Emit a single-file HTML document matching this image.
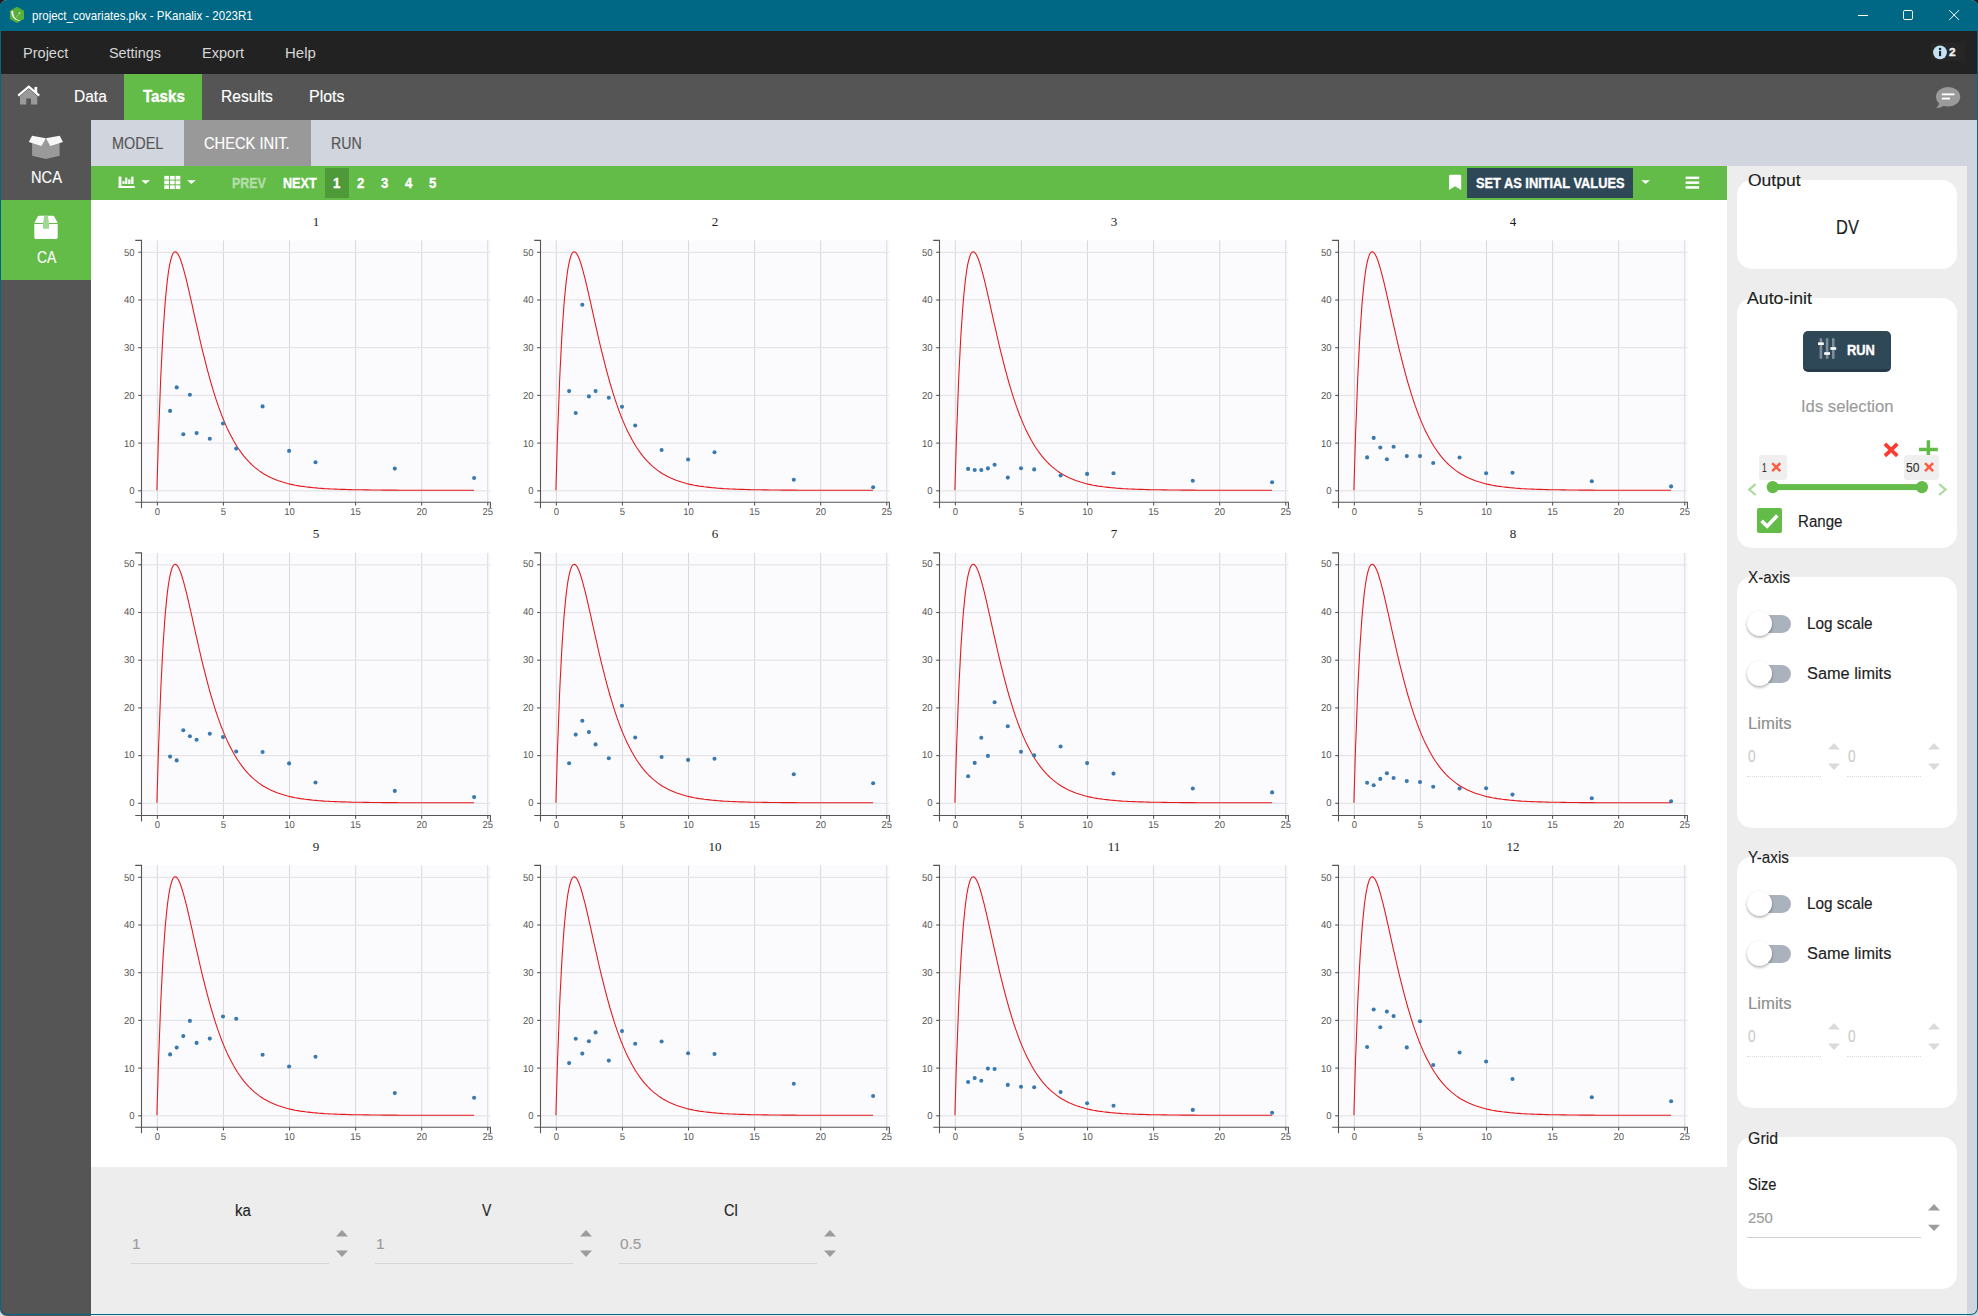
<!DOCTYPE html>
<html lang="en"><head><meta charset="utf-8"><title>project_covariates.pkx - PKanalix - 2023R1</title>
<style>
html,body{margin:0;padding:0}
body{width:1978px;height:1316px;position:relative;overflow:hidden;background:#d9d9d9;font-family:"Liberation Sans",sans-serif}
.abs,.t,.b{position:absolute}
.t{white-space:nowrap;transform-origin:0 0;display:block;-webkit-text-stroke:0.15px currentColor}
.b{display:block}
#win{position:absolute;left:0;top:0;width:1978px;height:1316px;overflow:hidden;background:#d1d5de;border-radius:7px}
.card{position:absolute;left:1737px;width:220px;background:#fff;border-radius:15px}
svg{position:absolute;overflow:visible}
</style></head><body>
<div class="b" style="left:0;top:0;width:1978px;height:20px;background:#1f1f1f"></div>
<div id="win">
<div class="b" style="left:0;top:0;width:1978px;height:31px;background:#006784"></div>
<div class="b" style="left:0;top:31px;width:1978px;height:43px;background:#222222"></div>
<div class="b" style="left:0;top:74px;width:1978px;height:46px;background:#555555"></div>
<div class="b" style="left:0;top:120px;width:91px;height:1196px;background:#555555"></div>
<div class="b" style="left:184px;top:120px;width:127px;height:46px;background:#999999"></div>
<div class="b" style="left:91px;top:166px;width:1636px;height:34px;background:#63bb48"></div>
<div class="b" style="left:91px;top:200px;width:1636px;height:967px;background:#ffffff"></div>
<div class="b" style="left:91px;top:1167px;width:1636px;height:149px;background:#ededed"></div>
<div class="b" style="left:1727px;top:166px;width:240px;height:1150px;background:#ededed"></div>
<div class="b" style="left:124px;top:74px;width:78px;height:46px;background:#63bb48"></div>
<div class="b" style="left:0;top:200px;width:91px;height:80px;background:#63bb48"></div>
<svg style="left:9px;top:6px" width="17" height="18" viewBox="0 0 17 18">
<path d="M7.95 0.8 L15.0 4.7 V13.05 L7.95 17 L0.9 13.05 V4.7 Z" fill="#58b03c"/>
<path d="M2.2 5.3 L4.1 4.7 C4.0 8.6 5.4 12.0 7.4 13.0 L6.8 13.8 C4.0 12.2 2.5 9.6 2.2 5.3 Z" fill="#fff"/>
<path d="M5.6 12.2 C7.2 13.6 8.8 14.3 10.6 14.7" fill="none" stroke="#e4f3df" stroke-width="0.9"/>
<path d="M6.0 12.7 L10.4 7.4" fill="none" stroke="#cfe8c7" stroke-width="0.8" stroke-dasharray="1.1 0.8"/>
<circle cx="10.6" cy="7.0" r="0.85" fill="#dff1da"/>
</svg>
<span class="t" style="left:31.70px;top:4px;font:400 12.60px/24px 'Liberation Sans',sans-serif;color:#ffffff;transform:scaleX(0.9138);-webkit-text-stroke:0;">project_covariates.pkx - PKanalix - 2023R1</span>
<svg style="left:1850px;top:0" width="128" height="31" viewBox="0 0 128 31">
<path d="M8 15.5 H18" stroke="#fff" stroke-width="1" fill="none"/>
<rect x="53.5" y="10.5" width="9" height="9" rx="1.3" fill="none" stroke="#fff" stroke-width="1"/>
<path d="M99.3 10.2 L109 19.9 M109 10.2 L99.3 19.9" stroke="#fff" stroke-width="1" fill="none"/>
</svg>
<span class="t" style="left:22.60px;top:41px;font:400 15.20px/24px 'Liberation Sans',sans-serif;color:#d6d6d6;transform:scaleX(0.9575);-webkit-text-stroke:0;">Project</span>
<span class="t" style="left:108.70px;top:41px;font:400 15.20px/24px 'Liberation Sans',sans-serif;color:#d6d6d6;transform:scaleX(0.9484);-webkit-text-stroke:0;">Settings</span>
<span class="t" style="left:201.70px;top:41px;font:400 15.20px/24px 'Liberation Sans',sans-serif;color:#d6d6d6;transform:scaleX(0.9582);-webkit-text-stroke:0;">Export</span>
<span class="t" style="left:284.70px;top:41px;font:400 15.20px/24px 'Liberation Sans',sans-serif;color:#d6d6d6;transform:scaleX(0.9854);-webkit-text-stroke:0;">Help</span>
<div class="b" style="left:1931px;top:43px;width:34px;height:18px;background:#262626"></div>
<svg style="left:1932px;top:44px" width="16" height="16" viewBox="0 0 16 16">
<circle cx="8" cy="8.3" r="6.9" fill="#c3e2f3"/>
<rect x="7" y="7" width="2.1" height="5.2" fill="#222"/><circle cx="8.05" cy="4.9" r="1.25" fill="#222"/>
</svg>
<span class="t" style="left:1949.20px;top:41px;font:700 10.20px/24px 'Liberation Sans',sans-serif;color:#f2f2f2;transform:scaleX(1.1633);-webkit-text-stroke:0.35px currentColor;">2</span>
<svg style="left:17px;top:85px" width="24" height="21" viewBox="0 0 24 21">
<path d="M3 11.2 L11.8 3.8 L20.3 11.2 V19.5 H14 V13.4 H9.3 V19.5 H3 Z" fill="#9a9a9a"/>
<rect x="17.5" y="1.9" width="2.7" height="6" fill="#fff"/>
<path d="M1.2 10.6 L11.8 1.6 L22.2 10.6" fill="none" stroke="#fff" stroke-width="2.2" stroke-linejoin="miter"/>
</svg>
<span class="t" style="left:73.70px;top:85px;font:400 17.00px/24px 'Liberation Sans',sans-serif;color:#ffffff;transform:scaleX(0.9133);">Data</span>
<span class="t" style="left:142.90px;top:85px;font:700 17.00px/24px 'Liberation Sans',sans-serif;color:#ffffff;transform:scaleX(0.8906);-webkit-text-stroke:0.35px currentColor;">Tasks</span>
<span class="t" style="left:220.60px;top:85px;font:400 17.00px/24px 'Liberation Sans',sans-serif;color:#ffffff;transform:scaleX(0.9156);">Results</span>
<span class="t" style="left:308.50px;top:85px;font:400 17.00px/24px 'Liberation Sans',sans-serif;color:#ffffff;transform:scaleX(0.9392);">Plots</span>
<svg style="left:1934px;top:85px" width="28" height="25" viewBox="0 0 28 25">
<ellipse cx="14.1" cy="11.7" rx="12.1" ry="9.8" fill="#9a9a9a"/>
<path d="M5.2 17.5 C5 20 3.6 21.8 1.9 22.8 C5.6 22.9 8.6 21.8 10.4 20.2 Z" fill="#9a9a9a"/>
<rect x="7.8" y="8.4" width="12.6" height="1.9" fill="#fff"/>
<rect x="7.8" y="12.6" width="8.2" height="1.9" fill="#fff"/>
</svg>
<span class="t" style="left:111.80px;top:131px;font:400 16.40px/24px 'Liberation Sans',sans-serif;color:#555555;transform:scaleX(0.8813);">MODEL</span>
<span class="t" style="left:204.00px;top:131px;font:400 16.40px/24px 'Liberation Sans',sans-serif;color:#ffffff;transform:scaleX(0.8957);">CHECK INIT.</span>
<span class="t" style="left:331.40px;top:131px;font:400 16.40px/24px 'Liberation Sans',sans-serif;color:#555555;transform:scaleX(0.8666);">RUN</span>
<svg style="left:28px;top:134px" width="36" height="26" viewBox="0 0 36 26">
<path d="M4.1 8.4 L17.9 5.0 L31.6 8.4 V21.7 L17.9 25.1 L4.1 21.7 Z" fill="#9a9a9a"/>
<path d="M0.8 8.0 L4.1 1.8 L17.9 4.3 L13.4 12.0 Z" fill="#f7f7f7"/>
<path d="M35.0 8.0 L31.7 1.8 L17.9 4.3 L22.4 12.0 Z" fill="#f7f7f7"/>
</svg>
<span class="t" style="left:30.90px;top:165px;font:400 16.40px/24px 'Liberation Sans',sans-serif;color:#ffffff;transform:scaleX(0.8926);">NCA</span>
<svg style="left:34px;top:215px" width="24" height="24" viewBox="0 0 24 24">
<path d="M0.3 7.9 L3.6 1.8 Q4.2 0.8 5.4 0.8 H18.6 Q19.8 0.8 20.4 1.8 L23.7 7.9 Z" fill="#fff"/>
<path d="M0.3 9.0 H23.7 V22.2 Q23.7 23.9 22 23.9 H2 Q0.3 23.9 0.3 22.2 Z" fill="#fff"/>
<path d="M10.2 0.8 H13.8 L15 7.9 V13.8 H9 V7.9 Z" fill="#a2d793"/>
</svg>
<span class="t" style="left:36.60px;top:245px;font:400 16.40px/24px 'Liberation Sans',sans-serif;color:#ffffff;transform:scaleX(0.8472);">CA</span>
<svg style="left:118px;top:176px" width="84" height="14" viewBox="0 0 84 14">
<g fill="#fff"><rect x="0.6" y="0.6" width="2.8" height="11.4"/><rect x="0.6" y="10" width="16.2" height="2"/>
<rect x="4.4" y="5.2" width="2.3" height="2.8"/><rect x="7.2" y="1.6" width="2.2" height="6.4"/>
<rect x="10.2" y="3.4" width="2.3" height="4.6"/><rect x="13.2" y="0.6" width="2.3" height="7.4"/>
<path d="M23.3 4.2 H31.9 L27.6 8 Z"/>
<rect x="46.30" y="-0.10" width="4.7" height="3.7"/><rect x="51.95" y="-0.10" width="4.7" height="3.7"/><rect x="57.60" y="-0.10" width="4.7" height="3.7"/><rect x="46.30" y="4.60" width="4.7" height="3.7"/><rect x="51.95" y="4.60" width="4.7" height="3.7"/><rect x="57.60" y="4.60" width="4.7" height="3.7"/><rect x="46.30" y="9.30" width="4.7" height="3.7"/><rect x="51.95" y="9.30" width="4.7" height="3.7"/><rect x="57.60" y="9.30" width="4.7" height="3.7"/>
<path d="M69.1 4.2 H77.7 L73.4 8 Z"/></g>
</svg>
<span class="t" style="left:232.30px;top:171px;font:700 13.90px/24px 'Liberation Sans',sans-serif;color:#b4dea8;transform:scaleX(0.8955);-webkit-text-stroke:0.35px currentColor;">PREV</span>
<span class="t" style="left:282.90px;top:171px;font:700 13.90px/24px 'Liberation Sans',sans-serif;color:#ffffff;transform:scaleX(0.9090);-webkit-text-stroke:0.35px currentColor;">NEXT</span>
<div class="b" style="left:325px;top:168px;width:24px;height:30px;background:#4e9a39"></div>
<span class="t" style="left:332.93px;top:171px;font:700 13.90px/24px 'Liberation Sans',sans-serif;color:#ffffff;transform:scaleX(0.9500);-webkit-text-stroke:0.35px currentColor;">1</span>
<span class="t" style="left:356.93px;top:171px;font:700 13.90px/24px 'Liberation Sans',sans-serif;color:#ffffff;transform:scaleX(0.9500);-webkit-text-stroke:0.35px currentColor;">2</span>
<span class="t" style="left:380.83px;top:171px;font:700 13.90px/24px 'Liberation Sans',sans-serif;color:#ffffff;transform:scaleX(0.9500);-webkit-text-stroke:0.35px currentColor;">3</span>
<span class="t" style="left:404.83px;top:171px;font:700 13.90px/24px 'Liberation Sans',sans-serif;color:#ffffff;transform:scaleX(0.9500);-webkit-text-stroke:0.35px currentColor;">4</span>
<span class="t" style="left:428.83px;top:171px;font:700 13.90px/24px 'Liberation Sans',sans-serif;color:#ffffff;transform:scaleX(0.9500);-webkit-text-stroke:0.35px currentColor;">5</span>
<svg style="left:1448px;top:174px" width="14" height="17" viewBox="0 0 14 17">
<path d="M1 2.1 Q1 0.7 2.4 0.7 H11.8 Q13.2 0.7 13.2 2.1 V15.9 L7.1 12.3 L1 15.9 Z" fill="#fff"/></svg>
<div class="b" style="left:1467px;top:168px;width:166px;height:30px;background:#2f4858"></div>
<span class="t" style="left:1476.00px;top:171px;font:700 14.10px/24px 'Liberation Sans',sans-serif;color:#ffffff;transform:scaleX(0.9090);-webkit-text-stroke:0.35px currentColor;">SET AS INITIAL VALUES</span>
<svg style="left:1640px;top:176px" width="62" height="14" viewBox="0 0 62 14">
<path d="M1.3 4.2 H9.9 L5.6 8 Z" fill="#fff"/>
<rect x="45.6" y="0.6" width="13.6" height="2.5" fill="#fff"/><rect x="45.6" y="5.4" width="13.6" height="2.5" fill="#fff"/><rect x="45.6" y="10.2" width="13.6" height="2.5" fill="#fff"/>
</svg>
<svg style="left:0;top:0" width="1978" height="1316" viewBox="0 0 1978 1316">
<style>.tk{font:10px "Liberation Sans",sans-serif;fill:#555;text-rendering:geometricPrecision}.tt{font:13px "Liberation Serif",serif;fill:#1c1c1c}</style>
<defs><g id="cg">
<line x1="0" x2="348.90" y1="250.40" y2="250.40" stroke="#e5e5e8" stroke-width="1.25"/>
<line x1="0" x2="348.90" y1="202.70" y2="202.70" stroke="#e5e5e8" stroke-width="1.25"/>
<line x1="0" x2="348.90" y1="155.00" y2="155.00" stroke="#e5e5e8" stroke-width="1.25"/>
<line x1="0" x2="348.90" y1="107.30" y2="107.30" stroke="#e5e5e8" stroke-width="1.25"/>
<line x1="0" x2="348.90" y1="59.60" y2="59.60" stroke="#e5e5e8" stroke-width="1.25"/>
<line x1="0" x2="348.90" y1="11.90" y2="11.90" stroke="#e5e5e8" stroke-width="1.25"/>
<polyline points="15.4,249.8 15.5,247.6 15.6,242.5 15.8,235.4 16.1,226.6 16.4,216.5 16.7,205.2 17.1,193.2 17.6,180.5 18.1,167.4 18.6,154.1 19.1,140.7 19.7,127.5 20.4,114.5 21.0,102.0 21.7,90.0 22.5,78.6 23.2,68.0 24.0,58.2 24.9,49.2 25.7,41.2 26.6,34.1 27.5,27.9 28.5,22.8 29.5,18.6 30.5,15.4 31.5,13.1 32.6,11.8 33.7,11.4 34.8,11.7 36.0,12.9 37.1,14.9 38.4,17.5 39.6,20.8 40.8,24.6 42.1,29.0 43.4,33.9 44.8,39.2 46.1,44.8 47.5,50.8 48.9,57.0 50.4,63.4 51.8,70.0 53.3,76.7 54.8,83.5 56.4,90.3 57.9,97.1 59.5,103.9 61.1,110.7 62.8,117.3 64.4,123.8 66.1,130.2 67.8,136.5 69.5,142.6 71.3,148.5 73.0,154.2 74.8,159.7 76.6,165.0 78.5,170.2 80.3,175.1 82.2,179.7 84.1,184.2 86.0,188.5 88.0,192.5 90.0,196.4 92.0,200.1 94.0,203.5 96.0,206.8 98.1,209.8 100.1,212.7 102.2,215.5 104.3,218.0 106.5,220.4 108.6,222.6 110.8,224.7 113.0,226.7 115.3,228.5 117.5,230.2 119.8,231.8 122.0,233.3 124.4,234.6 126.7,235.9 129.0,237.1 131.4,238.1 133.8,239.1 136.2,240.1 138.6,240.9 141.1,241.7 143.5,242.4 146.0,243.1 148.5,243.7 151.0,244.2 153.6,244.8 156.1,245.2 158.7,245.7 161.3,246.0 163.9,246.4 166.6,246.7 169.2,247.0 171.9,247.3 174.6,247.5 177.3,247.8 180.1,248.0 182.8,248.2 185.6,248.3 188.4,248.5 191.2,248.6 194.0,248.7 196.9,248.9 199.7,249.0 202.6,249.0 205.5,249.1 208.4,249.2 211.4,249.3 214.3,249.3 217.3,249.4 220.3,249.4 223.3,249.5 226.3,249.5 229.4,249.6 232.5,249.6 235.5,249.6 238.6,249.6 241.8,249.7 244.9,249.7 248.1,249.7 251.2,249.7 254.4,249.7 257.6,249.8 260.9,249.8 264.1,249.8 267.4,249.8 270.6,249.8 273.9,249.8 277.2,249.8 280.6,249.8 283.9,249.8 287.3,249.8 290.7,249.8 294.1,249.8 297.5,249.8 300.9,249.8 304.4,249.8 307.8,249.8 311.3,249.8 314.8,249.8 318.3,249.8 321.9,249.8 325.4,249.8 329.0,249.8 332.6,249.8" fill="none" stroke="#e3191c" stroke-width="1.08" stroke-linejoin="round"/>
</g>
<g id="cb">
<rect x="0" y="0" width="348.90" height="261.80" fill="#fbfbfe"/>
<line y1="0" y2="261.80" x1="15.86" x2="15.86" stroke="#d8d8db" stroke-width="1"/>
<line y1="0" y2="261.80" x1="81.94" x2="81.94" stroke="#d8d8db" stroke-width="1"/>
<line y1="0" y2="261.80" x1="148.02" x2="148.02" stroke="#d8d8db" stroke-width="1"/>
<line y1="0" y2="261.80" x1="214.10" x2="214.10" stroke="#d8d8db" stroke-width="1"/>
<line y1="0" y2="261.80" x1="280.18" x2="280.18" stroke="#d8d8db" stroke-width="1"/>
<line y1="0" y2="261.80" x1="346.26" x2="346.26" stroke="#d8d8db" stroke-width="1"/>
<use href="#cg"/>
<path d="M-6.3 0 H0 V261.80 H-6.3" fill="none" stroke="#555555" stroke-width="1.1"/>
<path d="M0 267.80 V261.80 H348.90 V267.80" fill="none" stroke="#555555" stroke-width="1.1"/>
<line x1="-3.3" x2="0" y1="250.40" y2="250.40" stroke="#555555" stroke-width="1.1"/>
<text transform="translate(-6.9,253.80) scale(0.950,1)" text-anchor="end" class="tk">0</text>
<line x1="-3.3" x2="0" y1="202.70" y2="202.70" stroke="#555555" stroke-width="1.1"/>
<text transform="translate(-6.9,206.10) scale(0.950,1)" text-anchor="end" class="tk">10</text>
<line x1="-3.3" x2="0" y1="155.00" y2="155.00" stroke="#555555" stroke-width="1.1"/>
<text transform="translate(-6.9,158.40) scale(0.950,1)" text-anchor="end" class="tk">20</text>
<line x1="-3.3" x2="0" y1="107.30" y2="107.30" stroke="#555555" stroke-width="1.1"/>
<text transform="translate(-6.9,110.70) scale(0.950,1)" text-anchor="end" class="tk">30</text>
<line x1="-3.3" x2="0" y1="59.60" y2="59.60" stroke="#555555" stroke-width="1.1"/>
<text transform="translate(-6.9,63.00) scale(0.950,1)" text-anchor="end" class="tk">40</text>
<line x1="-3.3" x2="0" y1="11.90" y2="11.90" stroke="#555555" stroke-width="1.1"/>
<text transform="translate(-6.9,15.30) scale(0.950,1)" text-anchor="end" class="tk">50</text>
<line y1="261.80" y2="265.10" x1="15.86" x2="15.86" stroke="#555555" stroke-width="1.1"/>
<text transform="translate(15.86,274.30) scale(0.950,1)" text-anchor="middle" class="tk">0</text>
<line y1="261.80" y2="265.10" x1="81.94" x2="81.94" stroke="#555555" stroke-width="1.1"/>
<text transform="translate(81.94,274.30) scale(0.950,1)" text-anchor="middle" class="tk">5</text>
<line y1="261.80" y2="265.10" x1="148.02" x2="148.02" stroke="#555555" stroke-width="1.1"/>
<text transform="translate(148.02,274.30) scale(0.950,1)" text-anchor="middle" class="tk">10</text>
<line y1="261.80" y2="265.10" x1="214.10" x2="214.10" stroke="#555555" stroke-width="1.1"/>
<text transform="translate(214.10,274.30) scale(0.950,1)" text-anchor="middle" class="tk">15</text>
<line y1="261.80" y2="265.10" x1="280.18" x2="280.18" stroke="#555555" stroke-width="1.1"/>
<text transform="translate(280.18,274.30) scale(0.950,1)" text-anchor="middle" class="tk">20</text>
<line y1="261.80" y2="265.10" x1="346.26" x2="346.26" stroke="#555555" stroke-width="1.1"/>
<text transform="translate(346.26,274.30) scale(0.950,1)" text-anchor="middle" class="tk">25</text>
</g>
<g id="cb2">
<rect x="0" y="0" width="348.90" height="262.60" fill="#fbfbfe"/>
<line y1="0" y2="262.60" x1="15.86" x2="15.86" stroke="#d8d8db" stroke-width="1"/>
<line y1="0" y2="262.60" x1="81.94" x2="81.94" stroke="#d8d8db" stroke-width="1"/>
<line y1="0" y2="262.60" x1="148.02" x2="148.02" stroke="#d8d8db" stroke-width="1"/>
<line y1="0" y2="262.60" x1="214.10" x2="214.10" stroke="#d8d8db" stroke-width="1"/>
<line y1="0" y2="262.60" x1="280.18" x2="280.18" stroke="#d8d8db" stroke-width="1"/>
<line y1="0" y2="262.60" x1="346.26" x2="346.26" stroke="#d8d8db" stroke-width="1"/>
<use href="#cg"/>
<path d="M-6.3 0 H0 V262.60 H-6.3" fill="none" stroke="#555555" stroke-width="1.1"/>
<path d="M0 268.60 V262.60 H348.90 V268.60" fill="none" stroke="#555555" stroke-width="1.1"/>
<line x1="-3.3" x2="0" y1="250.40" y2="250.40" stroke="#555555" stroke-width="1.1"/>
<text transform="translate(-6.9,253.00) scale(0.950,1)" text-anchor="end" class="tk">0</text>
<line x1="-3.3" x2="0" y1="202.70" y2="202.70" stroke="#555555" stroke-width="1.1"/>
<text transform="translate(-6.9,205.30) scale(0.950,1)" text-anchor="end" class="tk">10</text>
<line x1="-3.3" x2="0" y1="155.00" y2="155.00" stroke="#555555" stroke-width="1.1"/>
<text transform="translate(-6.9,157.60) scale(0.950,1)" text-anchor="end" class="tk">20</text>
<line x1="-3.3" x2="0" y1="107.30" y2="107.30" stroke="#555555" stroke-width="1.1"/>
<text transform="translate(-6.9,109.90) scale(0.950,1)" text-anchor="end" class="tk">30</text>
<line x1="-3.3" x2="0" y1="59.60" y2="59.60" stroke="#555555" stroke-width="1.1"/>
<text transform="translate(-6.9,62.20) scale(0.950,1)" text-anchor="end" class="tk">40</text>
<line x1="-3.3" x2="0" y1="11.90" y2="11.90" stroke="#555555" stroke-width="1.1"/>
<text transform="translate(-6.9,14.50) scale(0.950,1)" text-anchor="end" class="tk">50</text>
<line y1="262.60" y2="265.90" x1="15.86" x2="15.86" stroke="#555555" stroke-width="1.1"/>
<text transform="translate(15.86,275.10) scale(0.950,1)" text-anchor="middle" class="tk">0</text>
<line y1="262.60" y2="265.90" x1="81.94" x2="81.94" stroke="#555555" stroke-width="1.1"/>
<text transform="translate(81.94,275.10) scale(0.950,1)" text-anchor="middle" class="tk">5</text>
<line y1="262.60" y2="265.90" x1="148.02" x2="148.02" stroke="#555555" stroke-width="1.1"/>
<text transform="translate(148.02,275.10) scale(0.950,1)" text-anchor="middle" class="tk">10</text>
<line y1="262.60" y2="265.90" x1="214.10" x2="214.10" stroke="#555555" stroke-width="1.1"/>
<text transform="translate(214.10,275.10) scale(0.950,1)" text-anchor="middle" class="tk">15</text>
<line y1="262.60" y2="265.90" x1="280.18" x2="280.18" stroke="#555555" stroke-width="1.1"/>
<text transform="translate(280.18,275.10) scale(0.950,1)" text-anchor="middle" class="tk">20</text>
<line y1="262.60" y2="265.90" x1="346.26" x2="346.26" stroke="#555555" stroke-width="1.1"/>
<text transform="translate(346.26,275.10) scale(0.950,1)" text-anchor="middle" class="tk">25</text>
</g></defs>
<g transform="translate(141.50,240.40)">
<use href="#cb"/>
<g fill="#3a79b0">
<circle cx="28.6" cy="170.5" r="2.05"/>
<circle cx="35.2" cy="147.0" r="2.05"/>
<circle cx="41.8" cy="193.8" r="2.05"/>
<circle cx="48.4" cy="154.3" r="2.05"/>
<circle cx="55.1" cy="192.7" r="2.05"/>
<circle cx="68.3" cy="198.4" r="2.05"/>
<circle cx="81.5" cy="183.1" r="2.05"/>
<circle cx="94.7" cy="208.2" r="2.05"/>
<circle cx="121.1" cy="166.0" r="2.05"/>
<circle cx="147.6" cy="210.5" r="2.05"/>
<circle cx="174.0" cy="221.9" r="2.05"/>
<circle cx="253.3" cy="228.2" r="2.05"/>
<circle cx="332.6" cy="237.6" r="2.05"/>
</g>
<text x="174.45" y="-14.5" text-anchor="middle" class="tt">1</text>
</g>
<g transform="translate(540.50,240.40)">
<use href="#cb"/>
<g fill="#3a79b0">
<circle cx="28.6" cy="150.7" r="2.05"/>
<circle cx="35.2" cy="172.6" r="2.05"/>
<circle cx="41.8" cy="64.4" r="2.05"/>
<circle cx="48.4" cy="156.0" r="2.05"/>
<circle cx="55.1" cy="150.7" r="2.05"/>
<circle cx="68.3" cy="157.4" r="2.05"/>
<circle cx="81.5" cy="166.4" r="2.05"/>
<circle cx="94.7" cy="185.1" r="2.05"/>
<circle cx="121.1" cy="209.6" r="2.05"/>
<circle cx="147.6" cy="219.1" r="2.05"/>
<circle cx="174.0" cy="211.8" r="2.05"/>
<circle cx="253.3" cy="239.4" r="2.05"/>
<circle cx="332.6" cy="246.8" r="2.05"/>
</g>
<text x="174.45" y="-14.5" text-anchor="middle" class="tt">2</text>
</g>
<g transform="translate(939.50,240.40)">
<use href="#cb"/>
<g fill="#3a79b0">
<circle cx="28.6" cy="228.5" r="2.05"/>
<circle cx="35.2" cy="229.6" r="2.05"/>
<circle cx="41.8" cy="229.7" r="2.05"/>
<circle cx="48.4" cy="228.0" r="2.05"/>
<circle cx="55.1" cy="224.4" r="2.05"/>
<circle cx="68.3" cy="237.2" r="2.05"/>
<circle cx="81.5" cy="227.8" r="2.05"/>
<circle cx="94.7" cy="229.0" r="2.05"/>
<circle cx="121.1" cy="235.1" r="2.05"/>
<circle cx="147.6" cy="233.5" r="2.05"/>
<circle cx="174.0" cy="232.9" r="2.05"/>
<circle cx="253.3" cy="240.4" r="2.05"/>
<circle cx="332.6" cy="241.9" r="2.05"/>
</g>
<text x="174.45" y="-14.5" text-anchor="middle" class="tt">3</text>
</g>
<g transform="translate(1338.50,240.40)">
<use href="#cb"/>
<g fill="#3a79b0">
<circle cx="28.6" cy="217.0" r="2.05"/>
<circle cx="35.2" cy="197.5" r="2.05"/>
<circle cx="41.8" cy="207.1" r="2.05"/>
<circle cx="48.4" cy="218.9" r="2.05"/>
<circle cx="55.1" cy="206.4" r="2.05"/>
<circle cx="68.3" cy="215.7" r="2.05"/>
<circle cx="81.5" cy="215.7" r="2.05"/>
<circle cx="94.7" cy="222.6" r="2.05"/>
<circle cx="121.1" cy="217.1" r="2.05"/>
<circle cx="147.6" cy="232.9" r="2.05"/>
<circle cx="174.0" cy="232.3" r="2.05"/>
<circle cx="253.3" cy="240.8" r="2.05"/>
<circle cx="332.6" cy="246.0" r="2.05"/>
</g>
<text x="174.45" y="-14.5" text-anchor="middle" class="tt">4</text>
</g>
<g transform="translate(141.50,552.90)">
<use href="#cb2"/>
<g fill="#3a79b0">
<circle cx="28.6" cy="203.7" r="2.05"/>
<circle cx="35.2" cy="207.5" r="2.05"/>
<circle cx="41.8" cy="177.4" r="2.05"/>
<circle cx="48.4" cy="183.3" r="2.05"/>
<circle cx="55.1" cy="186.9" r="2.05"/>
<circle cx="68.3" cy="180.8" r="2.05"/>
<circle cx="81.5" cy="184.2" r="2.05"/>
<circle cx="94.7" cy="198.6" r="2.05"/>
<circle cx="121.1" cy="199.1" r="2.05"/>
<circle cx="147.6" cy="210.5" r="2.05"/>
<circle cx="174.0" cy="229.6" r="2.05"/>
<circle cx="253.3" cy="238.0" r="2.05"/>
<circle cx="332.6" cy="244.2" r="2.05"/>
</g>
<text x="174.45" y="-14.5" text-anchor="middle" class="tt">5</text>
</g>
<g transform="translate(540.50,552.90)">
<use href="#cb2"/>
<g fill="#3a79b0">
<circle cx="28.6" cy="210.3" r="2.05"/>
<circle cx="35.2" cy="181.7" r="2.05"/>
<circle cx="41.8" cy="167.9" r="2.05"/>
<circle cx="48.4" cy="179.2" r="2.05"/>
<circle cx="55.1" cy="191.5" r="2.05"/>
<circle cx="68.3" cy="205.4" r="2.05"/>
<circle cx="81.5" cy="152.9" r="2.05"/>
<circle cx="94.7" cy="184.6" r="2.05"/>
<circle cx="121.1" cy="204.1" r="2.05"/>
<circle cx="147.6" cy="207.0" r="2.05"/>
<circle cx="174.0" cy="205.9" r="2.05"/>
<circle cx="253.3" cy="221.4" r="2.05"/>
<circle cx="332.6" cy="230.3" r="2.05"/>
</g>
<text x="174.45" y="-14.5" text-anchor="middle" class="tt">6</text>
</g>
<g transform="translate(939.50,552.90)">
<use href="#cb2"/>
<g fill="#3a79b0">
<circle cx="28.6" cy="223.4" r="2.05"/>
<circle cx="35.2" cy="210.0" r="2.05"/>
<circle cx="41.8" cy="184.9" r="2.05"/>
<circle cx="48.4" cy="203.0" r="2.05"/>
<circle cx="55.1" cy="149.3" r="2.05"/>
<circle cx="68.3" cy="173.3" r="2.05"/>
<circle cx="81.5" cy="198.8" r="2.05"/>
<circle cx="94.7" cy="202.5" r="2.05"/>
<circle cx="121.1" cy="193.6" r="2.05"/>
<circle cx="147.6" cy="210.2" r="2.05"/>
<circle cx="174.0" cy="220.7" r="2.05"/>
<circle cx="253.3" cy="235.6" r="2.05"/>
<circle cx="332.6" cy="239.5" r="2.05"/>
</g>
<text x="174.45" y="-14.5" text-anchor="middle" class="tt">7</text>
</g>
<g transform="translate(1338.50,552.90)">
<use href="#cb2"/>
<g fill="#3a79b0">
<circle cx="28.6" cy="229.9" r="2.05"/>
<circle cx="35.2" cy="232.4" r="2.05"/>
<circle cx="41.8" cy="226.0" r="2.05"/>
<circle cx="48.4" cy="220.3" r="2.05"/>
<circle cx="55.1" cy="225.1" r="2.05"/>
<circle cx="68.3" cy="228.2" r="2.05"/>
<circle cx="81.5" cy="229.2" r="2.05"/>
<circle cx="94.7" cy="233.8" r="2.05"/>
<circle cx="121.1" cy="235.6" r="2.05"/>
<circle cx="147.6" cy="235.3" r="2.05"/>
<circle cx="174.0" cy="241.7" r="2.05"/>
<circle cx="253.3" cy="245.4" r="2.05"/>
<circle cx="332.6" cy="248.4" r="2.05"/>
</g>
<text x="174.45" y="-14.5" text-anchor="middle" class="tt">8</text>
</g>
<g transform="translate(141.50,865.40)">
<use href="#cb"/>
<g fill="#3a79b0">
<circle cx="28.6" cy="189.0" r="2.05"/>
<circle cx="35.2" cy="182.2" r="2.05"/>
<circle cx="41.8" cy="170.7" r="2.05"/>
<circle cx="48.4" cy="155.5" r="2.05"/>
<circle cx="55.1" cy="177.5" r="2.05"/>
<circle cx="68.3" cy="173.2" r="2.05"/>
<circle cx="81.5" cy="151.1" r="2.05"/>
<circle cx="94.7" cy="153.4" r="2.05"/>
<circle cx="121.1" cy="189.3" r="2.05"/>
<circle cx="147.6" cy="201.1" r="2.05"/>
<circle cx="174.0" cy="191.4" r="2.05"/>
<circle cx="253.3" cy="227.7" r="2.05"/>
<circle cx="332.6" cy="232.4" r="2.05"/>
</g>
<text x="174.45" y="-14.5" text-anchor="middle" class="tt">9</text>
</g>
<g transform="translate(540.50,865.40)">
<use href="#cb"/>
<g fill="#3a79b0">
<circle cx="28.6" cy="197.7" r="2.05"/>
<circle cx="35.2" cy="173.4" r="2.05"/>
<circle cx="41.8" cy="188.2" r="2.05"/>
<circle cx="48.4" cy="175.9" r="2.05"/>
<circle cx="55.1" cy="167.0" r="2.05"/>
<circle cx="68.3" cy="195.2" r="2.05"/>
<circle cx="81.5" cy="165.7" r="2.05"/>
<circle cx="94.7" cy="178.4" r="2.05"/>
<circle cx="121.1" cy="176.1" r="2.05"/>
<circle cx="147.6" cy="187.9" r="2.05"/>
<circle cx="174.0" cy="188.6" r="2.05"/>
<circle cx="253.3" cy="218.4" r="2.05"/>
<circle cx="332.6" cy="230.6" r="2.05"/>
</g>
<text x="174.45" y="-14.5" text-anchor="middle" class="tt">10</text>
</g>
<g transform="translate(939.50,865.40)">
<use href="#cb"/>
<g fill="#3a79b0">
<circle cx="28.6" cy="216.6" r="2.05"/>
<circle cx="35.2" cy="212.7" r="2.05"/>
<circle cx="41.8" cy="215.4" r="2.05"/>
<circle cx="48.4" cy="203.2" r="2.05"/>
<circle cx="55.1" cy="203.6" r="2.05"/>
<circle cx="68.3" cy="219.5" r="2.05"/>
<circle cx="81.5" cy="221.4" r="2.05"/>
<circle cx="94.7" cy="221.8" r="2.05"/>
<circle cx="121.1" cy="226.6" r="2.05"/>
<circle cx="147.6" cy="237.9" r="2.05"/>
<circle cx="174.0" cy="240.4" r="2.05"/>
<circle cx="253.3" cy="244.5" r="2.05"/>
<circle cx="332.6" cy="247.3" r="2.05"/>
</g>
<text x="174.45" y="-14.5" text-anchor="middle" class="tt">11</text>
</g>
<g transform="translate(1338.50,865.40)">
<use href="#cb"/>
<g fill="#3a79b0">
<circle cx="28.6" cy="181.6" r="2.05"/>
<circle cx="35.2" cy="144.1" r="2.05"/>
<circle cx="41.8" cy="161.8" r="2.05"/>
<circle cx="48.4" cy="146.2" r="2.05"/>
<circle cx="55.1" cy="150.7" r="2.05"/>
<circle cx="68.3" cy="182.0" r="2.05"/>
<circle cx="81.5" cy="155.9" r="2.05"/>
<circle cx="94.7" cy="199.6" r="2.05"/>
<circle cx="121.1" cy="187.1" r="2.05"/>
<circle cx="147.6" cy="196.1" r="2.05"/>
<circle cx="174.0" cy="213.6" r="2.05"/>
<circle cx="253.3" cy="231.8" r="2.05"/>
<circle cx="332.6" cy="235.9" r="2.05"/>
</g>
<text x="174.45" y="-14.5" text-anchor="middle" class="tt">12</text>
</g>
</svg>
<span class="t" style="left:235.20px;top:1199px;font:400 16.60px/24px 'Liberation Sans',sans-serif;color:#222222;transform:scaleX(0.9068);">ka</span>
<span class="t" style="left:131.90px;top:1232px;font:400 15.40px/24px 'Liberation Sans',sans-serif;color:#9c9c9c;transform:scaleX(1.0000);">1</span>
<div class="b" style="left:131.0px;top:1263px;width:198px;height:1px;background:#d6d6d6"></div>
<svg style="left:335.6px;top:1229.7px" width="12.0" height="28.0"><path d="M0 6.4 L6.0 0 L12.0 6.4 Z" fill="#9c9c9c"/><path d="M0 20.6 L6.0 27.0 L12.0 20.6 Z" fill="#9c9c9c"/></svg>
<span class="t" style="left:482.30px;top:1199px;font:400 16.60px/24px 'Liberation Sans',sans-serif;color:#222222;transform:scaleX(0.8397);">V</span>
<span class="t" style="left:375.90px;top:1232px;font:400 15.40px/24px 'Liberation Sans',sans-serif;color:#9c9c9c;transform:scaleX(1.0000);">1</span>
<div class="b" style="left:375.0px;top:1263px;width:198px;height:1px;background:#d6d6d6"></div>
<svg style="left:579.6px;top:1229.7px" width="12.0" height="28.0"><path d="M0 6.4 L6.0 0 L12.0 6.4 Z" fill="#9c9c9c"/><path d="M0 20.6 L6.0 27.0 L12.0 20.6 Z" fill="#9c9c9c"/></svg>
<span class="t" style="left:723.80px;top:1199px;font:400 16.60px/24px 'Liberation Sans',sans-serif;color:#222222;transform:scaleX(0.8745);">Cl</span>
<span class="t" style="left:619.90px;top:1232px;font:400 15.40px/24px 'Liberation Sans',sans-serif;color:#9c9c9c;transform:scaleX(1.0000);">0.5</span>
<div class="b" style="left:619.0px;top:1263px;width:198px;height:1px;background:#d6d6d6"></div>
<svg style="left:823.6px;top:1229.7px" width="12.0" height="28.0"><path d="M0 6.4 L6.0 0 L12.0 6.4 Z" fill="#9c9c9c"/><path d="M0 20.6 L6.0 27.0 L12.0 20.6 Z" fill="#9c9c9c"/></svg>
<div class="card" style="top:180px;height:89px"></div>
<div class="card" style="top:298px;height:250px"></div>
<div class="card" style="top:577px;height:251px"></div>
<div class="card" style="top:857px;height:251px"></div>
<div class="card" style="top:1137px;height:152px"></div>
<span class="t" style="left:1747.70px;top:168px;font:400 16.40px/24px 'Liberation Sans',sans-serif;color:#1e1e1e;transform:scaleX(1.0685);">Output</span>
<span class="t" style="left:1836.10px;top:215px;font:400 20.40px/24px 'Liberation Sans',sans-serif;color:#1e1e1e;transform:scaleX(0.8081);">DV</span>
<span class="t" style="left:1747.30px;top:286px;font:400 16.40px/24px 'Liberation Sans',sans-serif;color:#1e1e1e;transform:scaleX(1.0803);">Auto-init</span>
<div class="b" style="left:1803px;top:331px;width:88px;height:38px;background:#2f4858;border-radius:5px;border-bottom:3px solid #26394a"></div>
<svg style="left:1817px;top:337px" width="22" height="23" viewBox="0 0 22 23"><rect x="2.6" y="1.2" width="2.6" height="20.6" fill="#7d8c98"/><rect x="8.8" y="1.2" width="2.6" height="20.6" fill="#7d8c98"/><rect x="15.0" y="1.2" width="2.6" height="20.6" fill="#7d8c98"/><rect x="1.0" y="5.4" width="5.8" height="2.6" fill="#fff"/><rect x="7.2" y="15.2" width="5.8" height="2.6" fill="#fff"/><rect x="13.4" y="10.2" width="5.8" height="2.6" fill="#fff"/></svg>
<span class="t" style="left:1846.90px;top:339px;font:700 13.80px/24px 'Liberation Sans',sans-serif;color:#ffffff;transform:scaleX(0.9329);-webkit-text-stroke:0.35px currentColor;">RUN</span>
<span class="t" style="left:1800.60px;top:394px;font:400 16.40px/24px 'Liberation Sans',sans-serif;color:#9b9b9b;transform:scaleX(1.0156);">Ids selection</span>
<svg style="left:1882px;top:440px" width="58" height="20" viewBox="0 0 58 20"><path d="M2.9 3.9 L15.3 15.9 M15.3 3.9 L2.9 15.9" stroke="#ff3b30" stroke-width="3.7" fill="none"/><path d="M37 9.4 H55.8 M46.4 0.2 V18.6" stroke="#63bb48" stroke-width="3.5" fill="none"/></svg>
<div class="b" style="left:1759px;top:455px;width:28px;height:25px;background:#efefef;border-radius:3px"></div>
<div class="b" style="left:1904px;top:455px;width:35px;height:25px;background:#efefef;border-radius:3px"></div>
<span class="t" style="left:1761.70px;top:456px;font:400 12.90px/24px 'Liberation Sans',sans-serif;color:#333;transform:scaleX(0.6550);">1</span>
<span class="t" style="left:1905.90px;top:456px;font:400 12.90px/24px 'Liberation Sans',sans-serif;color:#333;transform:scaleX(0.9337);">50</span>
<svg style="left:1770px;top:461px" width="170" height="13" viewBox="0 0 170 13"><path d="M2.2 2.1 L10.3 10.2 M10.3 2.1 L2.2 10.2" stroke="#ff5b42" stroke-width="2.5" fill="none"/><path d="M155 2.1 L163.1 10.2 M163.1 2.1 L155 10.2" stroke="#ff5b42" stroke-width="2.5" fill="none"/></svg>
<svg style="left:1745px;top:480px" width="205" height="18" viewBox="0 0 205 18"><rect x="27.7" y="4.1" width="149.3" height="6" fill="#63bb48"/><circle cx="27.7" cy="7.1" r="6.1" fill="#63bb48"/><circle cx="177" cy="7.1" r="6.1" fill="#63bb48"/><path d="M10.6 4.2 L4.2 9.6 L10.6 15" stroke="#aadb9d" stroke-width="2.2" fill="none"/><path d="M194.2 4.2 L200.6 9.6 L194.2 15" stroke="#aadb9d" stroke-width="2.2" fill="none"/></svg>
<div class="b" style="left:1757px;top:508px;width:25px;height:25px;background:#63bb48;border-radius:2px"></div>
<svg style="left:1757px;top:508px" width="25" height="25" viewBox="0 0 25 25"><path d="M4.6 12.9 L10.2 18.2 L20.3 7.4" stroke="#fff" stroke-width="3.6" fill="none"/></svg>
<span class="t" style="left:1797.70px;top:510px;font:400 16.00px/24px 'Liberation Sans',sans-serif;color:#1e1e1e;transform:scaleX(0.9417);">Range</span>
<span class="t" style="left:1747.60px;top:565px;font:400 16.40px/24px 'Liberation Sans',sans-serif;color:#1e1e1e;transform:scaleX(0.9262);">X-axis</span>
<div class="b" style="left:1752px;top:614.6px;width:39px;height:18px;border-radius:9px;background:#aab2bd"></div>
<div class="b" style="left:1747px;top:611.1px;width:25px;height:25px;border-radius:13px;background:#fff;box-shadow:0 1.5px 3px rgba(0,0,0,.32)"></div>
<span class="t" style="left:1806.70px;top:612px;font:400 16.00px/24px 'Liberation Sans',sans-serif;color:#1e1e1e;transform:scaleX(0.9577);">Log scale</span>
<div class="b" style="left:1752px;top:664.6px;width:39px;height:18px;border-radius:9px;background:#aab2bd"></div>
<div class="b" style="left:1747px;top:661.1px;width:25px;height:25px;border-radius:13px;background:#fff;box-shadow:0 1.5px 3px rgba(0,0,0,.32)"></div>
<span class="t" style="left:1806.70px;top:662px;font:400 16.00px/24px 'Liberation Sans',sans-serif;color:#1e1e1e;transform:scaleX(1.0197);">Same limits</span>
<span class="t" style="left:1747.70px;top:712px;font:400 16.00px/24px 'Liberation Sans',sans-serif;color:#8e8e8e;transform:scaleX(1.0437);">Limits</span>
<span class="t" style="left:1747.60px;top:745px;font:400 15.60px/24px 'Liberation Sans',sans-serif;color:#cccccc;transform:scaleX(0.8758);">0</span>
<span class="t" style="left:1847.60px;top:745px;font:400 15.60px/24px 'Liberation Sans',sans-serif;color:#cccccc;transform:scaleX(0.8758);">0</span>
<div class="b" style="left:1747px;top:776.0px;width:74px;height:0;border-top:1px dotted #dadada"></div>
<div class="b" style="left:1847px;top:776.0px;width:74px;height:0;border-top:1px dotted #dadada"></div>
<svg style="left:1827.5px;top:742.7px" width="12.0" height="28.0"><path d="M0 6.4 L6.0 0 L12.0 6.4 Z" fill="#dadada"/><path d="M0 20.6 L6.0 27.0 L12.0 20.6 Z" fill="#dadada"/></svg>
<svg style="left:1927.5px;top:742.7px" width="12.0" height="28.0"><path d="M0 6.4 L6.0 0 L12.0 6.4 Z" fill="#dadada"/><path d="M0 20.6 L6.0 27.0 L12.0 20.6 Z" fill="#dadada"/></svg>
<span class="t" style="left:1747.60px;top:845px;font:400 16.40px/24px 'Liberation Sans',sans-serif;color:#1e1e1e;transform:scaleX(0.9285);">Y-axis</span>
<div class="b" style="left:1752px;top:894.6px;width:39px;height:18px;border-radius:9px;background:#aab2bd"></div>
<div class="b" style="left:1747px;top:891.1px;width:25px;height:25px;border-radius:13px;background:#fff;box-shadow:0 1.5px 3px rgba(0,0,0,.32)"></div>
<span class="t" style="left:1806.70px;top:892px;font:400 16.00px/24px 'Liberation Sans',sans-serif;color:#1e1e1e;transform:scaleX(0.9577);">Log scale</span>
<div class="b" style="left:1752px;top:944.6px;width:39px;height:18px;border-radius:9px;background:#aab2bd"></div>
<div class="b" style="left:1747px;top:941.1px;width:25px;height:25px;border-radius:13px;background:#fff;box-shadow:0 1.5px 3px rgba(0,0,0,.32)"></div>
<span class="t" style="left:1806.70px;top:942px;font:400 16.00px/24px 'Liberation Sans',sans-serif;color:#1e1e1e;transform:scaleX(1.0197);">Same limits</span>
<span class="t" style="left:1747.70px;top:992px;font:400 16.00px/24px 'Liberation Sans',sans-serif;color:#8e8e8e;transform:scaleX(1.0437);">Limits</span>
<span class="t" style="left:1747.60px;top:1025px;font:400 15.60px/24px 'Liberation Sans',sans-serif;color:#cccccc;transform:scaleX(0.8758);">0</span>
<span class="t" style="left:1847.60px;top:1025px;font:400 15.60px/24px 'Liberation Sans',sans-serif;color:#cccccc;transform:scaleX(0.8758);">0</span>
<div class="b" style="left:1747px;top:1056.0px;width:74px;height:0;border-top:1px dotted #dadada"></div>
<div class="b" style="left:1847px;top:1056.0px;width:74px;height:0;border-top:1px dotted #dadada"></div>
<svg style="left:1827.5px;top:1022.7px" width="12.0" height="28.0"><path d="M0 6.4 L6.0 0 L12.0 6.4 Z" fill="#dadada"/><path d="M0 20.6 L6.0 27.0 L12.0 20.6 Z" fill="#dadada"/></svg>
<svg style="left:1927.5px;top:1022.7px" width="12.0" height="28.0"><path d="M0 6.4 L6.0 0 L12.0 6.4 Z" fill="#dadada"/><path d="M0 20.6 L6.0 27.0 L12.0 20.6 Z" fill="#dadada"/></svg>
<span class="t" style="left:1747.70px;top:1126px;font:400 16.40px/24px 'Liberation Sans',sans-serif;color:#1e1e1e;transform:scaleX(0.9716);">Grid</span>
<span class="t" style="left:1747.70px;top:1173px;font:400 16.00px/24px 'Liberation Sans',sans-serif;color:#1e1e1e;transform:scaleX(0.9124);">Size</span>
<span class="t" style="left:1747.50px;top:1206px;font:400 15.40px/24px 'Liberation Sans',sans-serif;color:#9c9c9c;transform:scaleX(0.9689);">250</span>
<div class="b" style="left:1747px;top:1237px;width:174px;height:1px;background:#d2d2d2"></div>
<svg style="left:1927.5px;top:1203.6px" width="12.0" height="28.1"><path d="M0 6.4 L6.0 0 L12.0 6.4 Z" fill="#9c9c9c"/><path d="M0 20.7 L6.0 27.1 L12.0 20.7 Z" fill="#9c9c9c"/></svg>
<div class="b" style="left:0;top:0;width:1976px;height:1314px;border:1px solid #006784;border-top:0;border-radius:0 0 7px 7px;pointer-events:none"></div>
</div>
</body></html>
